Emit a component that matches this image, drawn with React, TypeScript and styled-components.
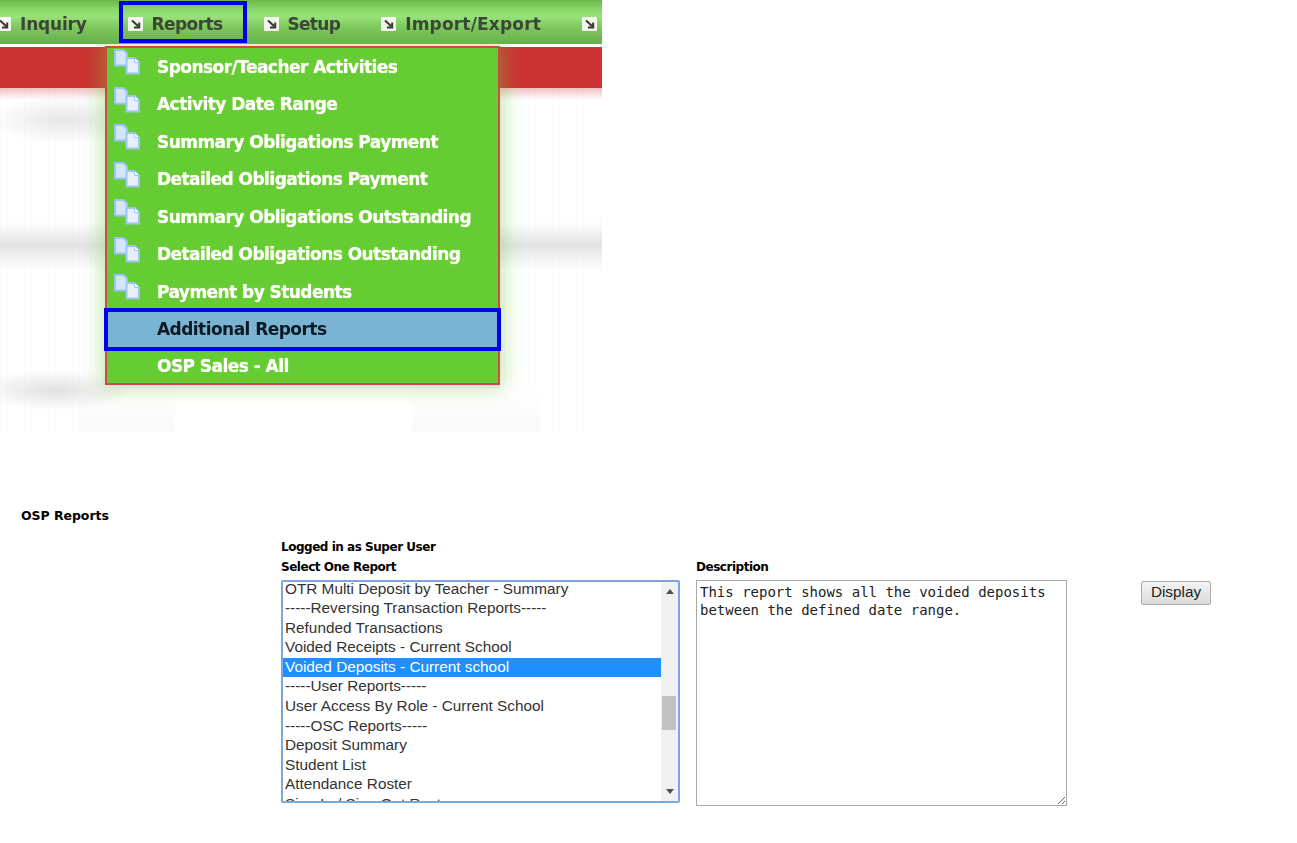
import React from "react";
import styled, { createGlobalStyle } from "styled-components";

const GlobalStyle = createGlobalStyle`
  html, body {
    margin: 0;
    padding: 0;
    background: #fff;
    font-family: "Open Sans", "Liberation Sans", sans-serif;
  }
`;

const Shot = styled.section`
  position: relative;
  width: 602px;
  height: 432px;
  overflow: hidden;
`;

const NavBar = styled.nav`
  display: flex;
  align-items: center;
  gap: 41px;
  height: 44px;
  background: linear-gradient(180deg, #6cb84c 0%, #8ad96b 22%, #97e178 38%, #7fc85f 62%, #68ae4a 100%);
  border-bottom: 3px solid #fff;
  filter: blur(0.4px);
`;

const NavItem = styled.div<{ $spacing: number }>`
  display: flex;
  align-items: center;
  gap: 9px;
  height: 44px;
  padding-top: 3px;
  box-sizing: border-box;
  flex: none;
  font-family: "DejaVu Sans", sans-serif;
  font-weight: 700;
  font-size: 17px;
  letter-spacing: ${props => props.$spacing}px;
  color: #3c4638;

  &:first-child {
    margin-left: -4px;
  }
`;

const NavMark = styled.svg`
  width: 15px;
  height: 14px;
  flex: none;
`;

const RedBand = styled.div`
  height: 41px;
  background: #cc3333;
`;

const Smudge = styled.div`
  height: 344px;
  background:
    linear-gradient(180deg, rgba(204, 51, 51, 0.3) 0, rgba(204, 51, 51, 0) 12px),
    radial-gradient(ellipse 75px 24px at 65px 32px, rgba(205, 205, 205, 0.5), rgba(205, 205, 205, 0)),
    linear-gradient(180deg, rgba(205, 205, 205, 0) 134px, rgba(205, 205, 205, 0.55) 157px, rgba(205, 205, 205, 0) 182px),
    radial-gradient(ellipse 80px 20px at 55px 302px, rgba(195, 195, 195, 0.5), rgba(195, 195, 195, 0)),
    linear-gradient(#fff, #f9f9f9) 80px 300px / 460px 44px no-repeat,
    repeating-linear-gradient(90deg, rgba(0, 0, 0, 0.012) 0, rgba(0, 0, 0, 0.012) 1px, transparent 1px, transparent 6px),
    #fff;
`;

const BottomNotch = styled.div`
  position: absolute;
  left: 175px;
  top: 388px;
  width: 237px;
  height: 44px;
  background: #fff;
`;

const Dropdown = styled.ul`
  position: absolute;
  left: 105px;
  top: 46px;
  width: 391px;
  margin: 0;
  padding: 0;
  list-style: none;
  background: #66cc33;
  border: 2px solid #cf4a40;
  box-shadow: 0 3px 0 #e2e2e2, 0 0 18px 4px rgba(110, 200, 60, 0.4);
  filter: blur(0.3px);
`;

const DropItem = styled.li<{ $active?: boolean }>`
  display: flex;
  align-items: center;
  height: 37.5px;
  font-family: "DejaVu Sans", sans-serif;
  font-weight: 700;
  font-size: 17px;
  letter-spacing: -0.55px;
  color: ${props => (props.$active ? "#0c1a24" : "#fff")};
  background: ${props => (props.$active ? "#7bb3d3" : "transparent")};
  outline: ${props => (props.$active ? "4px solid #0000ee" : "none")};
  outline-offset: -1.5px;
  text-shadow: ${props => (props.$active ? "none" : "0 0 1px #f6ffc0")};

  &:last-child {
    height: 35px;
  }
`;

const IconSlot = styled.span`
  align-self: flex-start;
  flex: none;
  width: 50px;
  height: 27px;
  padding: 1px 0 0 7px;
  box-sizing: border-box;
`;

const DocsIcon = styled.svg`
  display: block;
  width: 27px;
  height: 26px;
`;

// the blue box drawn round "Reports" in the original picture
const Callout = styled.div`
  position: absolute;
  left: 119px;
  top: 1px;
  width: 128px;
  height: 42px;
  box-sizing: border-box;
  border: 4px solid #0000ee;
`;

const ReportsPage = styled.main`
  padding: 76px 0 0 21px;
  color: #000;
`;

const Title = styled.h1`
  margin: 0;
  height: 32px;
  font-family: "DejaVu Sans", sans-serif;
  font-size: 12.5px;
  font-weight: 700;
  line-height: 15px;
  letter-spacing: -0.05px;
`;

const FormGrid = styled.div`
  display: grid;
  grid-template-columns: 399px 388px auto;
  margin-left: 260px;
`;

const LoggedIn = styled.div`
  grid-column: 1 / -1;
  height: 20px;
  font-family: "DejaVu Sans", sans-serif;
  font-size: 12px;
  font-weight: 700;
  line-height: 15px;
  letter-spacing: -0.47px;
`;

const FieldLabel = styled.div<{ $inset?: number }>`
  height: 20px;
  margin-left: ${props => props.$inset || 0}px;
  font-family: "DejaVu Sans", sans-serif;
  font-size: 12px;
  font-weight: 700;
  line-height: 15px;
  letter-spacing: -0.47px;
`;

const ListBox = styled.div`
  display: flex;
  width: 399px;
  height: 223px;
  box-sizing: border-box;
  border: 2px solid #7da6dc;
  border-radius: 2px;
  overflow: hidden;
`;

const Options = styled.div`
  flex: 1;
  min-width: 0;
  overflow: hidden;
  margin-top: -2.5px;
`;

const Option = styled.div<{ $selected?: boolean }>`
  height: 19.6px;
  padding-left: 2px;
  font-family: "Liberation Sans", Arial, sans-serif;
  font-size: 15.33px;
  line-height: 18px;
  white-space: nowrap;
  color: ${props => (props.$selected ? "#fff" : "#333")};
  background: ${props => (props.$selected ? "#1e90ff" : "transparent")};
`;

const ScrollTrack = styled.div`
  position: relative;
  flex: none;
  width: 17px;
  background: #f1f1f1;
`;

const ScrollArrow = styled.span<{ $up?: boolean }>`
  position: absolute;
  left: 5px;
  ${props => (props.$up ? "top: 7px;" : "bottom: 7px;")}
  width: 0;
  height: 0;
  border-left: 4px solid transparent;
  border-right: 4px solid transparent;
  ${props => (props.$up ? "border-bottom: 5px solid #505050;" : "border-top: 5px solid #505050;")}
`;

const ScrollThumb = styled.span`
  position: absolute;
  left: 1px;
  top: 114px;
  width: 14px;
  height: 34px;
  background: #c1c1c1;
`;

const Description = styled.textarea`
  display: block;
  width: 371px;
  height: 226px;
  margin: 0 0 0 16px;
  padding: 2px 3px;
  box-sizing: border-box;
  border: 1px solid #a9a9a9;
  border-radius: 0;
  outline: none;
  font-family: "DejaVu Sans Mono", monospace;
  font-size: 14px;
  line-height: 18px;
  color: #222;
  background: #fff;
`;

const ButtonCell = styled.div`
  padding-left: 73px;
`;

const DisplayButton = styled.button`
  display: block;
  width: 70px;
  height: 24px;
  margin-top: 1px;
  padding: 0 0 2px;
  box-sizing: border-box;
  border: 1px solid #adadad;
  border-radius: 2px;
  background: linear-gradient(180deg, #f3f3f3, #dcdcdc);
  font-family: "Liberation Sans", Arial, sans-serif;
  font-size: 15.3px;
  color: #222;
`;

const navItems = [
  { name: "Inquiry", spacing: -0.2 },
  { name: "Reports", spacing: -0.6 },
  { name: "Setup", spacing: -0.7 },
  { name: "Import/Export", spacing: 0.18 },
  { name: "", spacing: 0 },
];

const menuItems = [
  { label: "Sponsor/Teacher Activities", icon: true },
  { label: "Activity Date Range", icon: true },
  { label: "Summary Obligations Payment", icon: true },
  { label: "Detailed Obligations Payment", icon: true },
  { label: "Summary Obligations Outstanding", icon: true },
  { label: "Detailed Obligations Outstanding", icon: true },
  { label: "Payment by Students", icon: true },
  { label: "Additional Reports", icon: false, active: true },
  { label: "OSP Sales - All", icon: false },
];

const reports = [
  "OTR Multi Deposit by Teacher - Summary",
  "-----Reversing Transaction Reports-----",
  "Refunded Transactions",
  "Voided Receipts - Current School",
  "Voided Deposits - Current school",
  "-----User Reports-----",
  "User Access By Role - Current School",
  "-----OSC Reports-----",
  "Deposit Summary",
  "Student List",
  "Attendance Roster",
  "Sign In / Sign Out Roster",
];

const ArrowMark = () => (
  <NavMark viewBox="0 0 15 14">
    <rect width="15" height="14" rx="1" fill="#f4f6f0" />
    <path d="M4 3.5 10 9M6 10.5h5.2V5.5" fill="none" stroke="#33392f" strokeWidth="2" />
  </NavMark>
);

const Docs = () => (
  <DocsIcon viewBox="0 0 27 26">
    <path d="M1 1h8.500l3.500 3.500v12h-12z" fill="#d5e6fb" stroke="#9cc4f2" strokeWidth="2" />
    <path d="M12.500 9h8l4.500 4.500v11h-12.500z" fill="#e6f0fd" stroke="#9cc4f2" strokeWidth="2" />
    <path d="M20.500 9v4.500h4.500" fill="#fff" stroke="#9cc4f2" />
  </DocsIcon>
);

const App: React.FC = () => {
  return (
    <>
      <GlobalStyle />
      <Shot>
        <NavBar>
          {navItems.map(item => (
            <NavItem key={item.name} $spacing={item.spacing}>
              <ArrowMark />
              {item.name}
            </NavItem>
          ))}
        </NavBar>
        <RedBand />
        <Smudge />
        <BottomNotch />
        <Dropdown>
          {menuItems.map(item => (
            <DropItem key={item.label} $active={item.active}>
              <IconSlot>{item.icon && <Docs />}</IconSlot>
              {item.label}
            </DropItem>
          ))}
        </Dropdown>
        <Callout />
      </Shot>
      <ReportsPage>
        <Title>OSP Reports</Title>
        <FormGrid>
          <LoggedIn>Logged in as Super User</LoggedIn>
          <FieldLabel>Select One Report</FieldLabel>
          <FieldLabel $inset={16}>Description</FieldLabel>
          <div />
          <ListBox>
            <Options>
              {reports.map(name => (
                <Option key={name} $selected={name === "Voided Deposits - Current school"}>
                  {name}
                </Option>
              ))}
            </Options>
            <ScrollTrack>
              <ScrollArrow $up />
              <ScrollThumb />
              <ScrollArrow />
            </ScrollTrack>
          </ListBox>
          <Description
            readOnly
            value="This report shows all the voided deposits between the defined date range."
          />
          <ButtonCell>
            <DisplayButton>Display</DisplayButton>
          </ButtonCell>
        </FormGrid>
      </ReportsPage>
    </>
  );
};

export default App;
